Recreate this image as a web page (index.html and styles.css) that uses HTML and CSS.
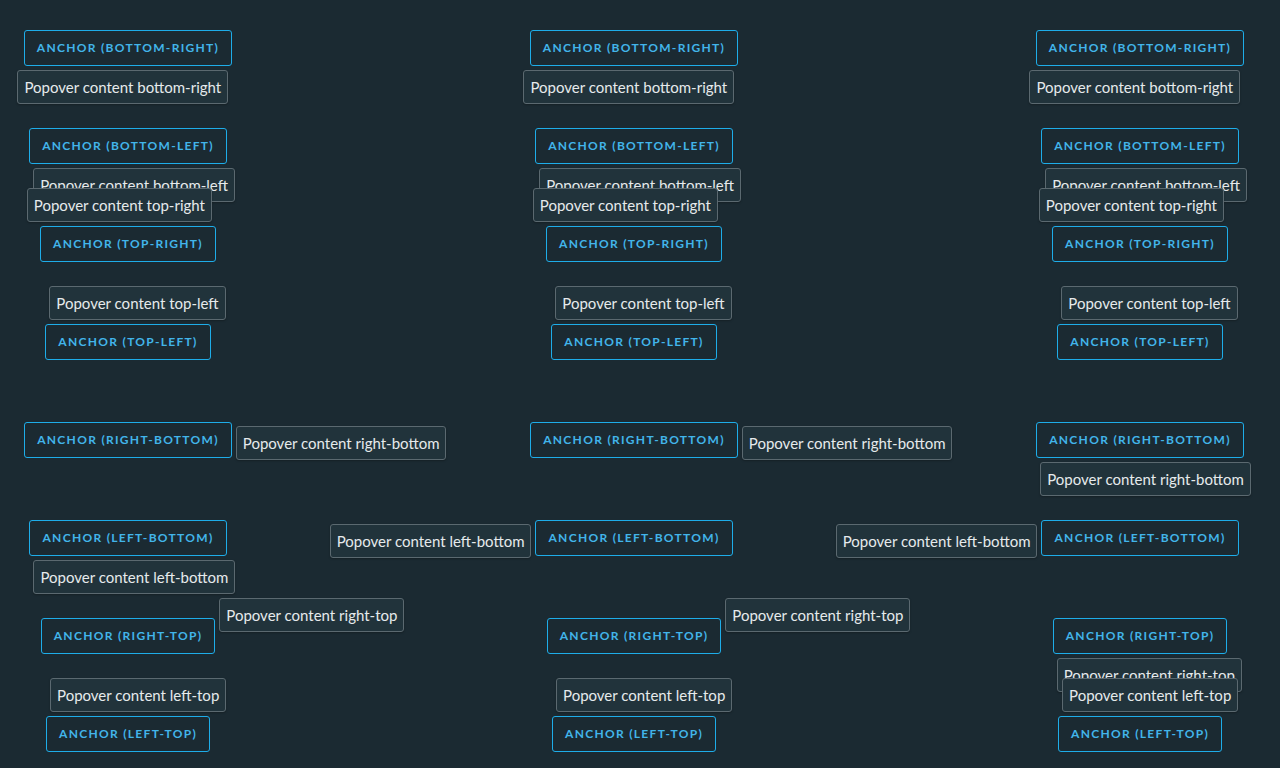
FILE: index.html
```html
<!DOCTYPE html>
<html lang="en">
<head>
<meta charset="utf-8">
<title>Popover positions</title>
<link rel="stylesheet" href="styles.css">
</head>
<body>
<main class="grid">
  <!-- row 1 -->
  <div class="cell"><div class="anchor-wrap"><button class="anchor">Anchor (bottom-right)</button><div class="popover pop-bottom-right">Popover content bottom-right</div></div></div>
  <div class="cell"><div class="anchor-wrap"><button class="anchor">Anchor (bottom-right)</button><div class="popover pop-bottom-right">Popover content bottom-right</div></div></div>
  <div class="cell"><div class="anchor-wrap"><button class="anchor">Anchor (bottom-right)</button><div class="popover pop-bottom-right">Popover content bottom-right</div></div></div>
  <!-- row 2 -->
  <div class="cell"><div class="anchor-wrap"><button class="anchor">Anchor (bottom-left)</button><div class="popover pop-bottom-left">Popover content bottom-left</div></div></div>
  <div class="cell"><div class="anchor-wrap"><button class="anchor">Anchor (bottom-left)</button><div class="popover pop-bottom-left">Popover content bottom-left</div></div></div>
  <div class="cell"><div class="anchor-wrap"><button class="anchor">Anchor (bottom-left)</button><div class="popover pop-bottom-left">Popover content bottom-left</div></div></div>
  <!-- row 3 -->
  <div class="cell"><div class="anchor-wrap"><button class="anchor">Anchor (top-right)</button><div class="popover pop-top-right">Popover content top-right</div></div></div>
  <div class="cell"><div class="anchor-wrap"><button class="anchor">Anchor (top-right)</button><div class="popover pop-top-right">Popover content top-right</div></div></div>
  <div class="cell"><div class="anchor-wrap"><button class="anchor">Anchor (top-right)</button><div class="popover pop-top-right">Popover content top-right</div></div></div>
  <!-- row 4 -->
  <div class="cell"><div class="anchor-wrap"><button class="anchor">Anchor (top-left)</button><div class="popover pop-top-left">Popover content top-left</div></div></div>
  <div class="cell"><div class="anchor-wrap"><button class="anchor">Anchor (top-left)</button><div class="popover pop-top-left">Popover content top-left</div></div></div>
  <div class="cell"><div class="anchor-wrap"><button class="anchor">Anchor (top-left)</button><div class="popover pop-top-left">Popover content top-left</div></div></div>
  <!-- row 5 -->
  <div class="cell"><div class="anchor-wrap"><button class="anchor">Anchor (right-bottom)</button><div class="popover pop-right-bottom">Popover content right-bottom</div></div></div>
  <div class="cell"><div class="anchor-wrap"><button class="anchor">Anchor (right-bottom)</button><div class="popover pop-right-bottom">Popover content right-bottom</div></div></div>
  <div class="cell"><div class="anchor-wrap"><button class="anchor">Anchor (right-bottom)</button><div class="popover pop-bottom-left">Popover content right-bottom</div></div></div>
  <!-- row 6 -->
  <div class="cell"><div class="anchor-wrap"><button class="anchor">Anchor (left-bottom)</button><div class="popover pop-bottom-left">Popover content left-bottom</div></div></div>
  <div class="cell"><div class="anchor-wrap"><button class="anchor">Anchor (left-bottom)</button><div class="popover pop-left-bottom">Popover content left-bottom</div></div></div>
  <div class="cell"><div class="anchor-wrap"><button class="anchor">Anchor (left-bottom)</button><div class="popover pop-left-bottom">Popover content left-bottom</div></div></div>
  <!-- row 7 -->
  <div class="cell"><div class="anchor-wrap"><button class="anchor">Anchor (right-top)</button><div class="popover pop-right-top">Popover content right-top</div></div></div>
  <div class="cell"><div class="anchor-wrap"><button class="anchor">Anchor (right-top)</button><div class="popover pop-right-top">Popover content right-top</div></div></div>
  <div class="cell"><div class="anchor-wrap"><button class="anchor">Anchor (right-top)</button><div class="popover pop-bottom-left">Popover content right-top</div></div></div>
  <!-- row 8 -->
  <div class="cell"><div class="anchor-wrap"><button class="anchor">Anchor (left-top)</button><div class="popover pop-top-left">Popover content left-top</div></div></div>
  <div class="cell"><div class="anchor-wrap"><button class="anchor">Anchor (left-top)</button><div class="popover pop-top-left">Popover content left-top</div></div></div>
  <div class="cell"><div class="anchor-wrap"><button class="anchor">Anchor (left-top)</button><div class="popover pop-top-left">Popover content left-top</div></div></div>
</main>
</body>
</html>
```

FILE: styles.css
```css
* { box-sizing: border-box; }

html, body {
  margin: 0;
  padding: 0;
  background: #1b2a32;
  height: 100%;
  overflow: hidden;
}

body {
  font-family: Lato, "Noto Sans", sans-serif;
}

.grid {
  display: grid;
  grid-template-columns: repeat(3, 256px);
  grid-template-rows: repeat(7, 98px) 36px;
  column-gap: 250px;
  padding-top: 30px;
}

.cell {
  display: flex;
  justify-content: center;
  align-items: flex-start;
}

.anchor-wrap {
  position: relative;
  display: inline-block;
}

.anchor {
  display: block;
  height: 36px;
  margin: 0;
  padding: 0 12px;
  background: transparent;
  border: 1px solid #1eade9;
  border-radius: 3px;
  color: #42b5ea;
  font-family: Lato, "Noto Sans", sans-serif;
  font-size: 12px;
  font-weight: 700;
  letter-spacing: 1.3px;
  text-transform: uppercase;
  line-height: 34px;
  white-space: nowrap;
  cursor: pointer;
}

.popover {
  position: absolute;
  white-space: nowrap;
  padding: 6px 6px;
  background: #21333b;
  border: 1px solid #5b6970;
  border-radius: 3px;
  color: #e6eaec;
  font-size: 15px;
  line-height: 20px;
  box-shadow: 0 1px 2px rgba(0, 0, 0, 0.25);
}

.pop-bottom-right { top: calc(100% + 4px); right: 4px; }
.pop-bottom-left  { top: calc(100% + 4px); left: 4px; }
.pop-top-right    { bottom: calc(100% + 4px); right: 4px; }
.pop-top-left     { bottom: calc(100% + 4px); left: 4px; }
.pop-right-bottom { left: calc(100% + 4px); top: 4px; }
.pop-left-bottom  { right: calc(100% + 4px); top: 4px; }
.pop-right-top    { left: calc(100% + 4px); top: -20px; }
```
